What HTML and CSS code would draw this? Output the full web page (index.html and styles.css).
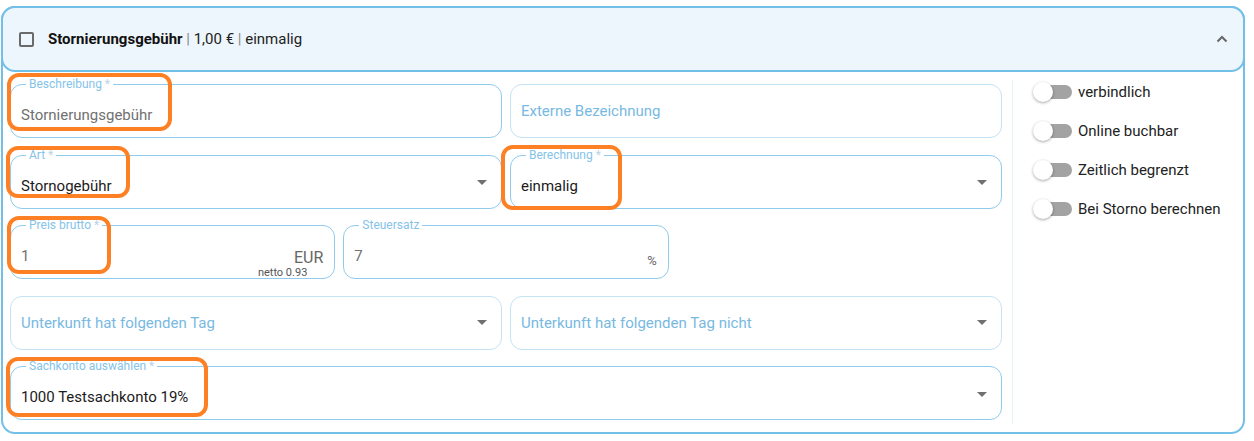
FILE: index.html
```html
<!DOCTYPE html>
<html lang="de">
<head>
  <meta charset="UTF-8">
  <meta name="viewport" content="width=device-width, initial-scale=1.0">
  <title>Stornierungsgebühr</title>
  <link rel="stylesheet" href="styles.css">
</head>
<body>
  <div class="card">
    <div class="card-header">
      <span class="checkbox"></span>
      <span class="title"><b>Stornierungsgebühr</b> <span class="sep">|</span> 1,00 € <span class="sep">|</span> einmalig</span>
      <svg class="chevron" width="12" height="8" viewBox="0 0 12 8">
        <path d="M1.5 6.5 L6 2 L10.5 6.5" fill="none" stroke="#666" stroke-width="2"/>
      </svg>
    </div>

    <div class="card-body">
      <div class="form">
        <div class="row">
          <div class="field filled">
            <label>Beschreibung <i>*</i></label>
            <span class="value muted">Stornierungsgebühr</span>
          </div>
          <div class="field">
            <span class="placeholder">Externe Bezeichnung</span>
          </div>
        </div>

        <div class="row">
          <div class="field filled">
            <label>Art <i>*</i></label>
            <span class="value">Stornogebühr</span>
            <span class="arrow"></span>
          </div>
          <div class="field filled">
            <label>Berechnung <i>*</i></label>
            <span class="value">einmalig</span>
            <span class="arrow"></span>
          </div>
        </div>

        <div class="row three">
          <div class="field filled">
            <label>Preis brutto <i>*</i></label>
            <span class="value muted">1</span>
            <span class="suffix">EUR</span>
            <span class="hint">netto 0.93</span>
          </div>
          <div class="field filled">
            <label>Steuersatz</label>
            <span class="value muted">7</span>
            <span class="suffix small">%</span>
          </div>
        </div>

        <div class="row">
          <div class="field">
            <span class="placeholder">Unterkunft hat folgenden Tag</span>
            <span class="arrow"></span>
          </div>
          <div class="field">
            <span class="placeholder">Unterkunft hat folgenden Tag nicht</span>
            <span class="arrow"></span>
          </div>
        </div>

        <div class="row one">
          <div class="field filled">
            <label>Sachkonto auswählen <i>*</i></label>
            <span class="value">1000 Testsachkonto 19%</span>
            <span class="arrow"></span>
          </div>
        </div>
      </div>

      <div class="switches">
        <div class="switch"><span class="toggle"></span>verbindlich</div>
        <div class="switch"><span class="toggle"></span>Online buchbar</div>
        <div class="switch"><span class="toggle"></span>Zeitlich begrenzt</div>
        <div class="switch"><span class="toggle"></span>Bei Storno berechnen</div>
      </div>
    </div>
  </div>

  <!-- Markierungen -->
  <div class="mark mark-desc"></div>
  <div class="mark mark-art"></div>
  <div class="mark mark-calc"></div>
  <div class="mark mark-price"></div>
  <div class="mark mark-account"></div>
</body>
</html>
```

FILE: styles.css
```css
body {
  margin: 0;
  font-family: Roboto, "Liberation Sans", sans-serif;
  background-color: #fff;
  color: #1d1d1d;
  position: relative;
}
.card {
  margin: 6px 0 0 1px;
  width: 1244px;
  box-sizing: border-box;
  border: 2px solid #72bfe8;
  border-radius: 14px;
}
.card-header {
  margin: -2px -2px 0;
  height: 66px;
  box-sizing: border-box;
  border: 2px solid #72bfe8;
  border-radius: 14px;
  background-color: #eef6fd;
  display: flex;
  align-items: center;
  padding: 0 15px 0 16px;
}
.checkbox {
  width: 15px;
  height: 15px;
  box-sizing: border-box;
  border: 2px solid #6a6a6a;
  border-radius: 2px;
}
.title {
  margin-left: 14px;
  font-size: 15px;
  color: #222;
}
.title b {
  font-weight: 700;
  color: #111;
}
.sep {
  color: #888;
}
.chevron {
  margin-left: auto;
}
.card-body {
  display: flex;
  padding: 8px 0 8px 7px;
}
.form {
  width: 992px;
  padding: 4px 0;
  display: flex;
  flex-direction: column;
  gap: 16.5px;
}
.row {
  display: grid;
  grid-template-columns: 1fr 1fr;
  gap: 8px;
}
.row.three {
  grid-template-columns: repeat(3, 1fr);
}
.row.one {
  grid-template-columns: 1fr;
}
.field {
  position: relative;
  height: 54px;
  box-sizing: border-box;
  border: 1px solid #c4e3f5;
  border-radius: 12px;
  display: flex;
  align-items: center;
  padding: 0 14px 0 10px;
  font-size: 15px;
}
.field.filled {
  border-color: #8ecbed;
  padding-top: 8px;
}
.field label {
  position: absolute;
  top: -8px;
  left: 15px;
  padding: 0 3px;
  background-color: #fff;
  font-size: 12px;
  line-height: 14px;
  color: #85c3e9;
}
.field label i {
  font-style: normal;
  color: #b9d4e6;
}
.value {
  color: #1b1b1b;
}
.value.muted {
  color: #717171;
}
.placeholder {
  color: #78b9e2;
}
.arrow {
  margin-left: auto;
  width: 0;
  height: 0;
  border-left: 5px solid transparent;
  border-right: 5px solid transparent;
  border-top: 5px solid #707070;
}
.field.filled .arrow {
  margin-bottom: 6px;
}
.suffix {
  margin-left: auto;
  margin-top: 2px;
  margin-right: -3px;
  font-size: 16px;
  color: #666;
}
.suffix.small {
  font-size: 13px;
  margin-top: 8px;
}
.hint {
  position: absolute;
  right: 27px;
  bottom: -1px;
  font-size: 11px;
  line-height: 13px;
  color: #555;
}
.switches {
  flex: 1;
  margin-left: 10px;
  border-left: 1px solid #e9f1f8;
  padding-left: 22px;
  display: flex;
  flex-direction: column;
  gap: 15px;
}
.switch {
  display: flex;
  align-items: center;
  height: 24px;
  font-size: 15px;
  color: #222;
}
.toggle {
  position: relative;
  width: 37px;
  height: 14px;
  border-radius: 7px;
  background-color: #a3a3a3;
  margin-right: 6px;
}
.toggle::before {
  content: "";
  position: absolute;
  left: -2px;
  top: -3px;
  width: 20px;
  height: 20px;
  border-radius: 50%;
  background-color: #fff;
  box-shadow: 0 1px 3px rgba(0, 0, 0, 0.35);
}
.mark {
  position: absolute;
  box-sizing: border-box;
  border: 4px solid #fd8024;
  border-radius: 12px;
}
.mark-desc {
  left: 7px;
  top: 73px;
  width: 165px;
  height: 58px;
}
.mark-art {
  left: 6px;
  top: 146px;
  width: 124px;
  height: 52px;
}
.mark-calc {
  left: 501px;
  top: 145px;
  width: 121px;
  height: 65px;
}
.mark-price {
  left: 7px;
  top: 216px;
  width: 104px;
  height: 58px;
}
.mark-account {
  left: 6px;
  top: 357px;
  width: 202px;
  height: 60px;
}
```
